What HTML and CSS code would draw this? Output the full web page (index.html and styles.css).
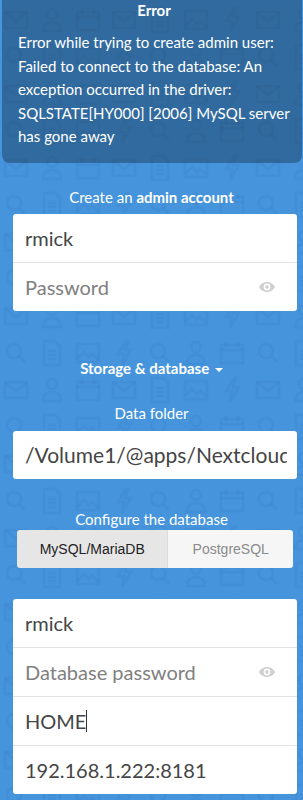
FILE: index.html
```html
<!DOCTYPE html>
<html>
<head>
<meta charset="utf-8">
<link rel="stylesheet" href="styles.css">
</head>
<body>
<div class="page">
  <div class="error">
    <div class="error-title">Error</div>
    <p class="error-text">Error while trying to create admin user: Failed to connect to the database: An exception occurred in the driver: SQLSTATE[HY000] [2006] MySQL server has gone away</p>
  </div>

  <div class="label label-admin">Create an <strong>admin account</strong></div>
  <div class="card">
    <div class="field">rmick</div>
    <div class="field placeholder">Password<svg class="eye" viewBox="0 0 16 10" width="16" height="10"><path d="M8 0C4.2 0 1.4 2.4 0 5c1.4 2.6 4.2 5 8 5s6.6-2.4 8-5C14.6 2.4 11.8 0 8 0zm0 1.6a3.4 3.4 0 1 1 0 6.8 3.4 3.4 0 0 1 0-6.8zm0 1.6a1.8 1.8 0 1 0 0 3.6 1.8 1.8 0 0 0 0-3.6z" fill="#cfcfcf"/></svg></div>
  </div>

  <div class="toggle">Storage &amp; database <span class="caret"></span></div>

  <div class="label label-data">Data folder</div>
  <div class="card">
    <div class="field"><span class="clip">/Volume1/@apps/Nextcloud/data</span></div>
  </div>

  <div class="label label-config">Configure the database</div>
  <div class="tabs">
    <div class="tab active">MySQL/MariaDB</div>
    <div class="tab other">PostgreSQL</div>
  </div>

  <div class="card card-db">
    <div class="field">rmick</div>
    <div class="field placeholder">Database password<svg class="eye" viewBox="0 0 16 10" width="16" height="10"><path d="M8 0C4.2 0 1.4 2.4 0 5c1.4 2.6 4.2 5 8 5s6.6-2.4 8-5C14.6 2.4 11.8 0 8 0zm0 1.6a3.4 3.4 0 1 1 0 6.8 3.4 3.4 0 0 1 0-6.8zm0 1.6a1.8 1.8 0 1 0 0 3.6 1.8 1.8 0 0 0 0-3.6z" fill="#cfcfcf"/></svg></div>
    <div class="field">HOME<span class="cursor"></span></div>
    <div class="field">192.168.1.222:8181</div>
  </div>
</div>
</body>
</html>
```
FILE: styles.css
```css
html, body {
  margin: 0;
  padding: 0;
}
body {
  background-color: #4594dc;
  background-image: url("data:image/svg+xml,%3Csvg xmlns='http://www.w3.org/2000/svg' xmlns:xlink='http://www.w3.org/1999/xlink' width='252' height='74'%3E%3Cdefs%3E%3Cg id='m'%3E%3Crect x='7' y='10' width='22' height='16' rx='1'/%3E%3Cpath d='M7 10l11 9 11-9'/%3E%3C/g%3E%3Cg id='d'%3E%3Cpath d='M10 6h11l5 5v19H10z'/%3E%3Cpath d='M14 16h8M14 20h8M14 24h8'/%3E%3C/g%3E%3Cg id='i'%3E%3Crect x='7' y='9' width='22' height='18' rx='1'/%3E%3Cpath d='M7 24l7-7 5 5 3-3 7 6'/%3E%3C/g%3E%3Cg id='b'%3E%3Cpath d='M20 6l-8 13h6l-2 11 9-15h-6l3-9z'/%3E%3C/g%3E%3Cg id='s'%3E%3Ccircle cx='16' cy='16' r='7'/%3E%3Cpath d='M21 21l6 6'/%3E%3C/g%3E%3Cg id='p'%3E%3Ccircle cx='18' cy='12' r='5'/%3E%3Cpath d='M9 29c0-6 4-9 9-9s9 3 9 9z'/%3E%3C/g%3E%3Cg id='c'%3E%3Crect x='7' y='10' width='22' height='18' rx='1'/%3E%3Cpath d='M7 15h22M12 7v5M24 7v5'/%3E%3C/g%3E%3C/defs%3E%3Cg fill='none' stroke='rgb(10,60,130)' stroke-opacity='0.055' stroke-width='3'%3E%3Cuse xlink:href='%23m'/%3E%3Cuse xlink:href='%23p' x='36'/%3E%3Cuse xlink:href='%23c' x='72'/%3E%3Cuse xlink:href='%23m' x='108'/%3E%3Cuse xlink:href='%23d' x='144'/%3E%3Cuse xlink:href='%23i' x='180'/%3E%3Cuse xlink:href='%23b' x='216'/%3E%3Cuse xlink:href='%23s' y='37'/%3E%3Cuse xlink:href='%23d' x='36' y='37'/%3E%3Cuse xlink:href='%23i' x='72' y='37'/%3E%3Cuse xlink:href='%23b' x='108' y='37'/%3E%3Cuse xlink:href='%23s' x='144' y='37'/%3E%3Cuse xlink:href='%23p' x='180' y='37'/%3E%3Cuse xlink:href='%23c' x='216' y='37'/%3E%3C/g%3E%3C/svg%3E");
  background-position: -2px 2px;
  font-family: "Lato", "Open Sans", sans-serif;
  color: #fff;
  width: 303px;
  height: 800px;
  overflow: hidden;
}
.page {
  display: flex;
  flex-direction: column;
}
.error {
  margin: 0 1px 0 2px;
  background: rgba(0, 0, 0, 0.28);
  border-radius: 0 0 8px 8px;
  padding: 0 12px 14px 16px;
}
.error-title {
  font-weight: 700;
  font-size: 15px;
  line-height: 20px;
  text-align: center;
}
.error-text {
  margin: 11px 0 0 0;
  font-size: 15px;
  line-height: 23.5px;
}
.label {
  text-align: center;
  font-size: 15px;
  line-height: 20px;
}
.label-admin { margin-top: 24px; margin-bottom: 7px; }
.label-data { margin-top: 25px; margin-bottom: 8px; }
.label-config { margin-top: 30px; margin-bottom: 1px; }
.card {
  margin: 0 6px 0 13px;
  background: #fff;
  border-radius: 3px;
  display: flex;
  flex-direction: column;
}
.field {
  height: 49px;
  display: flex;
  align-items: center;
  padding: 0 10px 0 12px;
  font-size: 20px;
  color: #454545;
  border-top: 1px solid #e2e2e2;
  box-sizing: border-box;
}
.field:first-child { border-top: none; height: 48px; }
.placeholder { color: #808080; justify-content: space-between; }
.eye { margin-right: 12px; }
.clip {
  display: block;
  white-space: nowrap;
  overflow: hidden;
  min-width: 0;
  flex: 1;
  font-size: 21px;
}
.cursor {
  display: inline-block;
  width: 1px;
  height: 22px;
  background: #333;
}
.toggle {
  margin-top: 47px;
  text-align: center;
  font-weight: 700;
  font-size: 15px;
  line-height: 20px;
}
.caret {
  display: inline-block;
  width: 0;
  height: 0;
  border-left: 4px solid transparent;
  border-right: 4px solid transparent;
  border-top: 4px solid #fff;
  vertical-align: middle;
  margin-left: 2px;
}
.tabs {
  margin: 0 10px 0 17px;
  display: flex;
  height: 38px;
  border-radius: 3px;
  overflow: hidden;
  font-family: "Liberation Sans", Arial, sans-serif;
  font-size: 14px;
}
.tab {
  display: flex;
  align-items: center;
  justify-content: center;
}
.tab.active {
  flex: 151;
  background: #e6e6e6;
  color: #222;
  border-right: 1px solid #dcdcdc;
}
.tab.other {
  flex: 125;
  background: #f6f6f6;
  color: #8a8a8a;
}
.card-db { margin-top: 31px; }
```
